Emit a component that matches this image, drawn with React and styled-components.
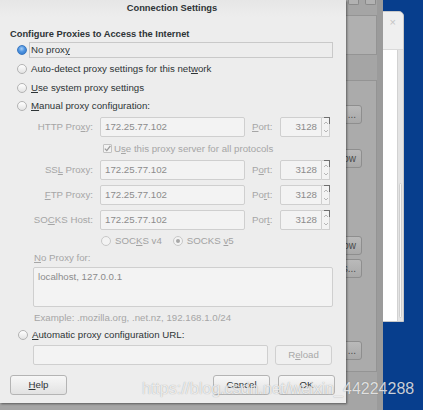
import React from "react";
import styled, { createGlobalStyle } from "styled-components";

const Global = createGlobalStyle`
  html, body { margin: 0; padding: 0; }
  body {
    width: 423px; height: 410px; overflow: hidden;
    font-family: "Liberation Sans", Arial, sans-serif;
  }
  * { box-sizing: border-box; }
`;

const Desktop = styled.div`
  position: relative;
  width: 423px;
  height: 410px;
  overflow: hidden;
  background: #073e8d;
  font-size: 9.7px;
  color: #2e3436;
`;

/* ---------- white window far behind ---------- */
const WhiteWindow = styled.div`
  position: absolute;
  left: 300px;
  top: 11px;
  width: 104px;
  height: 311px;
  background: #efefef;
  border: 1px solid #c9c9c9;
  border-radius: 0 5px 0 0;
  display: flex;
  flex-direction: column;
`;
const WhiteTitle = styled.div`
  height: 37px;
  display: flex;
  justify-content: flex-end;
  padding: 4px 7px 0 0;
  color: #c4c4c4;
  font-size: 11px;
`;
const WhiteBody = styled.div`
  flex: 1;
  display: flex;
  justify-content: flex-end;
  background: #ffffff;
  border-top: 1px solid #dadada;
`;
const ScrollTrack = styled.div`
  width: 6px;
  background: #e4e4e4;
  border-left: 1px solid #d2d2d2;
  padding: 133px 1px 3px 1px;
  display: flex;
`;
const ScrollThumb = styled.div`
  flex: 1;
  background: #f7f7f7;
  border: 1px solid #cfcfcf;
  border-radius: 2px;
`;

/* ---------- grey window behind the dialog ---------- */
const GreyWindow = styled.div`
  position: absolute;
  left: 0;
  top: 0;
  width: 383px;
  height: 410px;
  background: #a5a5a5;
  border-right: 6px solid #9b9b9b;
  display: flex;
  flex-direction: column;
  align-items: flex-end;
`;
const GreyTitle = styled.div`
  height: 14px;
  display: flex;
  gap: 6px;
  padding-right: 1px;
  align-items: flex-start;
`;
const GreyTitleButton = styled.div`
  width: 11px;
  height: 5px;
  border: 1px solid #8a8a8a;
  border-top: none;
  border-radius: 0 0 2px 2px;
  background: #b2b2b2;
`;
const GreyBox = styled.div`
  margin-top: 1px;
  width: 80px;
  height: 40px;
  background: #b0b0b0;
  border: 1px solid #949494;
`;
const GreyPanel = styled.div`
  margin-top: 25px;
  width: 80px;
  height: 292px;
  background: #ababab;
  border: 1px solid #949494;
  display: flex;
  flex-direction: column;
  align-items: flex-end;
  padding-right: 14px;
`;
const StubButton = styled.div`
  margin-top: ${(p) => p.$mt}px;
  width: 60px;
  height: 19px;
  border: 1px solid #8e8e8e;
  border-radius: 3px;
  background: linear-gradient(#bababa, #a9a9a9);
  color: #4a4a4a;
  font-size: 10px;
  line-height: 17px;
  text-align: right;
  padding-right: 5px;
`;

/* ---------- dialog ---------- */
const Dialog = styled.div`
  position: absolute;
  left: 0;
  top: 0;
  width: 346px;
  height: 403px;
  background: #ededed;
  box-shadow: 1px 1px 2px rgba(0, 0, 0, 0.45);
  display: flex;
  flex-direction: column;
`;
const TitleBar = styled.div`
  height: 17px;
  line-height: 17px;
  text-align: center;
  font-weight: bold;
  font-size: 9.3px;
  color: #2e3436;
  background: linear-gradient(#e6e6e6, #ededed);
  padding-right: 2px;
`;
const Body = styled.div`
  flex: 1;
  display: flex;
  flex-direction: column;
  padding: 10px 13px 0 10px;
`;
const Heading = styled.div`
  height: 14px;
  line-height: 14px;
  font-weight: bold;
  font-size: 9.3px;
`;
const OptionRow = styled.div`
  display: flex;
  align-items: center;
  height: ${(p) => p.$h || 18.7}px;
  padding-left: ${(p) => p.$indent ?? 7}px;
  gap: 2px;
  color: ${(p) => (p.$disabled ? "#a2a2a2" : "#2e3436")};
  white-space: nowrap;
`;
const OptionText = styled.span`
  flex: ${(p) => (p.$focused ? 1 : "none")};
  height: 16px;
  line-height: 14px;
  padding-left: 1px;
  border: 1px solid ${(p) => (p.$focused ? "#c9c9c9" : "transparent")};
  margin-right: ${(p) => p.$mr || 0}px;
`;
const Radio = styled.span`
  width: 10px;
  height: 10px;
  border-radius: 50%;
  flex: none;
  display: flex;
  align-items: center;
  justify-content: center;
  border: 1px solid ${(p) => (p.$disabled ? "#c8c8c8" : p.$checked ? "#3b78c0" : "#b3b3b3")};
  background: ${(p) =>
    p.$checked && !p.$disabled
      ? "radial-gradient(circle at 45% 35%, #a9cff5 0, #4d93e0 45%, #2f74c6 100%)"
      : p.$disabled
      ? "#f3f3f3"
      : "linear-gradient(#ffffff, #e3e3e3)"};
  &::after {
    content: "";
    display: ${(p) => (p.$checked && p.$disabled ? "block" : "none")};
    width: 4px;
    height: 4px;
    border-radius: 50%;
    background: #a8a8a8;
  }
`;
const Key = styled.span`
  text-decoration: underline;
  text-underline-offset: 1px;
`;

const ProxyRow = styled.div`
  display: grid;
  grid-template-columns: 83px 145px 21px 50px;
  column-gap: 7px;
  height: 20px;
  margin-top: ${(p) => p.$mt || 0}px;
  align-items: center;
`;
const FieldLabel = styled.span`
  text-align: ${(p) => (p.$left ? "left" : "right")};
  color: #a6a6a6;
  white-space: nowrap;
`;
const TextField = styled.div`
  height: 20px;
  border: 1px solid #cfcfcf;
  border-radius: 2px;
  background: #f3f3f3;
  color: #8c8c8c;
  line-height: 18px;
  padding: 0 4px;
  white-space: nowrap;
  width: ${(p) => (p.$w ? `${p.$w}px` : "auto")};
  flex: ${(p) => (p.$w ? "none" : 1)};
`;
const PortBox = styled.div`
  display: flex;
  height: 20px;
`;
const PortInput = styled(TextField)`
  width: 42px;
  text-align: right;
  padding-right: 4px;
  border-radius: 2px 0 0 2px;
`;
const Spinner = styled.div`
  position: relative;
  width: 8px;
  height: 20px;
  border: 1px solid #cfcfcf;
  border-left: none;
  background: #f3f3f3;
  &::after {
    content: "";
    position: absolute;
    top: -1px;
    right: -1px;
    width: 5px;
    height: 6px;
    border-top: 1px solid #6f6f6f;
    border-right: 1px solid #6f6f6f;
  }
`;

const CheckRow = styled.div`
  height: 23px;
  display: flex;
  align-items: center;
  padding-left: 93px;
  gap: 2px;
  color: #a6a6a6;
`;
const CheckBox = styled.span`
  width: 9px;
  height: 9px;
  border: 1px solid #c2c2c2;
  border-radius: 1px;
  background: #f2f2f2;
  display: flex;
`;

const SmallLabel = styled.div`
  height: ${(p) => p.$h}px;
  margin-top: ${(p) => p.$mt || 0}px;
  line-height: ${(p) => p.$h}px;
  padding-left: 24px;
  color: #a6a6a6;
  white-space: nowrap;
`;
const TextArea = styled.div`
  margin: 3px 0 0 23px;
  height: 40px;
  border: 1px solid #cfcfcf;
  border-radius: 2px;
  background: #f3f3f3;
  color: #8c8c8c;
  padding: 2px 4px;
  line-height: 14px;
`;
const UrlRow = styled.div`
  display: flex;
  gap: 7px;
  margin: 1.5px 1px 0 23px;
  height: 20px;
`;
const Button = styled.div`
  width: 57px;
  height: 20px;
  border: 1px solid ${(p) => (p.$disabled ? "#d0d0d0" : "#b4b4b4")};
  border-radius: 3px;
  background: ${(p) => (p.$disabled ? "#f0f0f0" : "linear-gradient(#f7f7f7, #e2e2e2)")};
  color: ${(p) => (p.$disabled ? "#a8a8a8" : "#2e3436")};
  text-align: center;
  line-height: 18px;
  flex: none;
`;
const Footer = styled.div`
  display: flex;
  justify-content: space-between;
  margin-top: 10px;
  margin-right: -2px;
`;
const ButtonGroup = styled.div`
  display: flex;
  gap: 8px;
`;

const Watermark = styled.div`
  position: absolute;
  left: 142px;
  top: 380px;
  font-family: "Liberation Sans", Arial, sans-serif;
  font-size: 16px;
  line-height: 18px;
  color: rgba(255, 255, 255, 0.78);
  text-shadow: 0 0 1px rgba(0, 0, 0, 0.35);
  white-space: nowrap;
  pointer-events: none;
`;

const SpinArrows = () => (
  <svg width="8" height="18" viewBox="0 0 8 18">
    <path d="M2 6 L4 4 L6 6" fill="none" stroke="#b0b0b0" strokeWidth="0.9" />
    <path d="M2 12 L4 14 L6 12" fill="none" stroke="#b0b0b0" strokeWidth="0.9" />
  </svg>
);

const Check = () => (
  <svg width="7" height="7" viewBox="0 0 7 7">
    <path d="M0.8 3.6 L2.8 5.6 L6.4 0.8" fill="none" stroke="#9a9a9a" strokeWidth="1.3" />
  </svg>
);

const Port = ({ value }) => (
  <PortBox>
    <PortInput>{value}</PortInput>
    <Spinner>
      <SpinArrows />
    </Spinner>
  </PortBox>
);

const proxies = [
  { label: <>HTTP Pro<Key>x</Key>y:</>, port: <><Key>P</Key>ort:</>, mt: 1 },
];

export default function App() {
  return (
    <>
      <Global />
      <Desktop>
        <WhiteWindow>
          <WhiteTitle>×</WhiteTitle>
          <WhiteBody>
            <ScrollTrack>
              <ScrollThumb />
            </ScrollTrack>
          </WhiteBody>
        </WhiteWindow>

        <GreyWindow>
          <GreyTitle>
            <GreyTitleButton />
            <GreyTitleButton />
          </GreyTitle>
          <GreyBox />
          <GreyPanel>
            <StubButton $mt={24}>...</StubButton>
            <StubButton $mt={25}>ow</StubButton>
            <StubButton $mt={68}>ow</StubButton>
            <StubButton $mt={4}>s...</StubButton>
            <StubButton $mt={63}>...</StubButton>
          </GreyPanel>
        </GreyWindow>

        <Dialog>
          <TitleBar>Connection Settings</TitleBar>
          <Body>
            <Heading>Configure Proxies to Access the Internet</Heading>
            <OptionRow>
              <Radio $checked />
              <OptionText $focused>
                No prox<Key>y</Key>
              </OptionText>
            </OptionRow>
            <OptionRow>
              <Radio />
              <OptionText>
                Auto-detect proxy settings for this net<Key>w</Key>ork
              </OptionText>
            </OptionRow>
            <OptionRow>
              <Radio />
              <OptionText>
                <Key>U</Key>se system proxy settings
              </OptionText>
            </OptionRow>
            <OptionRow>
              <Radio />
              <OptionText>
                <Key>M</Key>anual proxy configuration:
              </OptionText>
            </OptionRow>

            {proxies.map((p, i) => (
              <ProxyRow key={i} $mt={p.mt}>
                <FieldLabel>{p.label}</FieldLabel>
                <TextField>172.25.77.102</TextField>
                <FieldLabel $left>{p.port}</FieldLabel>
                <Port value="3128" />
              </ProxyRow>
            ))}

            <CheckRow>
              <CheckBox>
                <Check />
              </CheckBox>
              <span>
                U<Key>s</Key>e this proxy server for all protocols
              </span>
            </CheckRow>

            <ProxyRow>
              <FieldLabel>
                SS<Key>L</Key> Proxy:
              </FieldLabel>
              <TextField>172.25.77.102</TextField>
              <FieldLabel $left>
                P<Key>o</Key>rt:
              </FieldLabel>
              <Port value="3128" />
            </ProxyRow>
            <ProxyRow $mt={5}>
              <FieldLabel>
                <Key>F</Key>TP Proxy:
              </FieldLabel>
              <TextField>172.25.77.102</TextField>
              <FieldLabel $left>
                Po<Key>r</Key>t:
              </FieldLabel>
              <Port value="3128" />
            </ProxyRow>
            <ProxyRow $mt={5}>
              <FieldLabel>
                SO<Key>C</Key>KS Host:
              </FieldLabel>
              <TextField>172.25.77.102</TextField>
              <FieldLabel $left>
                Por<Key>t</Key>:
              </FieldLabel>
              <Port value="3128" />
            </ProxyRow>

            <OptionRow $h={22} $indent={91} $disabled>
              <Radio $disabled />
              <OptionText $mr={8}>
                SOC<Key>K</Key>S v4
              </OptionText>
              <Radio $disabled $checked />
              <OptionText>
                SOCKS <Key>v</Key>5
              </OptionText>
            </OptionRow>

            <SmallLabel $h={12}>
              <Key>N</Key>o Proxy for:
            </SmallLabel>
            <TextArea>localhost, 127.0.0.1</TextArea>
            <SmallLabel $h={18} $mt={2}>
              Example: .mozilla.org, .net.nz, 192.168.1.0/24
            </SmallLabel>

            <OptionRow $h={17} $indent={8}>
              <Radio />
              <OptionText>
                <Key>A</Key>utomatic proxy configuration URL:
              </OptionText>
            </OptionRow>
            <UrlRow>
              <TextField />
              <Button $disabled>
                R<Key>e</Key>load
              </Button>
            </UrlRow>

            <Footer>
              <Button>
                <Key>H</Key>elp
              </Button>
              <ButtonGroup>
                <Button>Cancel</Button>
                <Button>OK</Button>
              </ButtonGroup>
            </Footer>
          </Body>
        </Dialog>

        <Watermark>https://blog.csdn.net/weixin_44224288</Watermark>
      </Desktop>
    </>
  );
}
